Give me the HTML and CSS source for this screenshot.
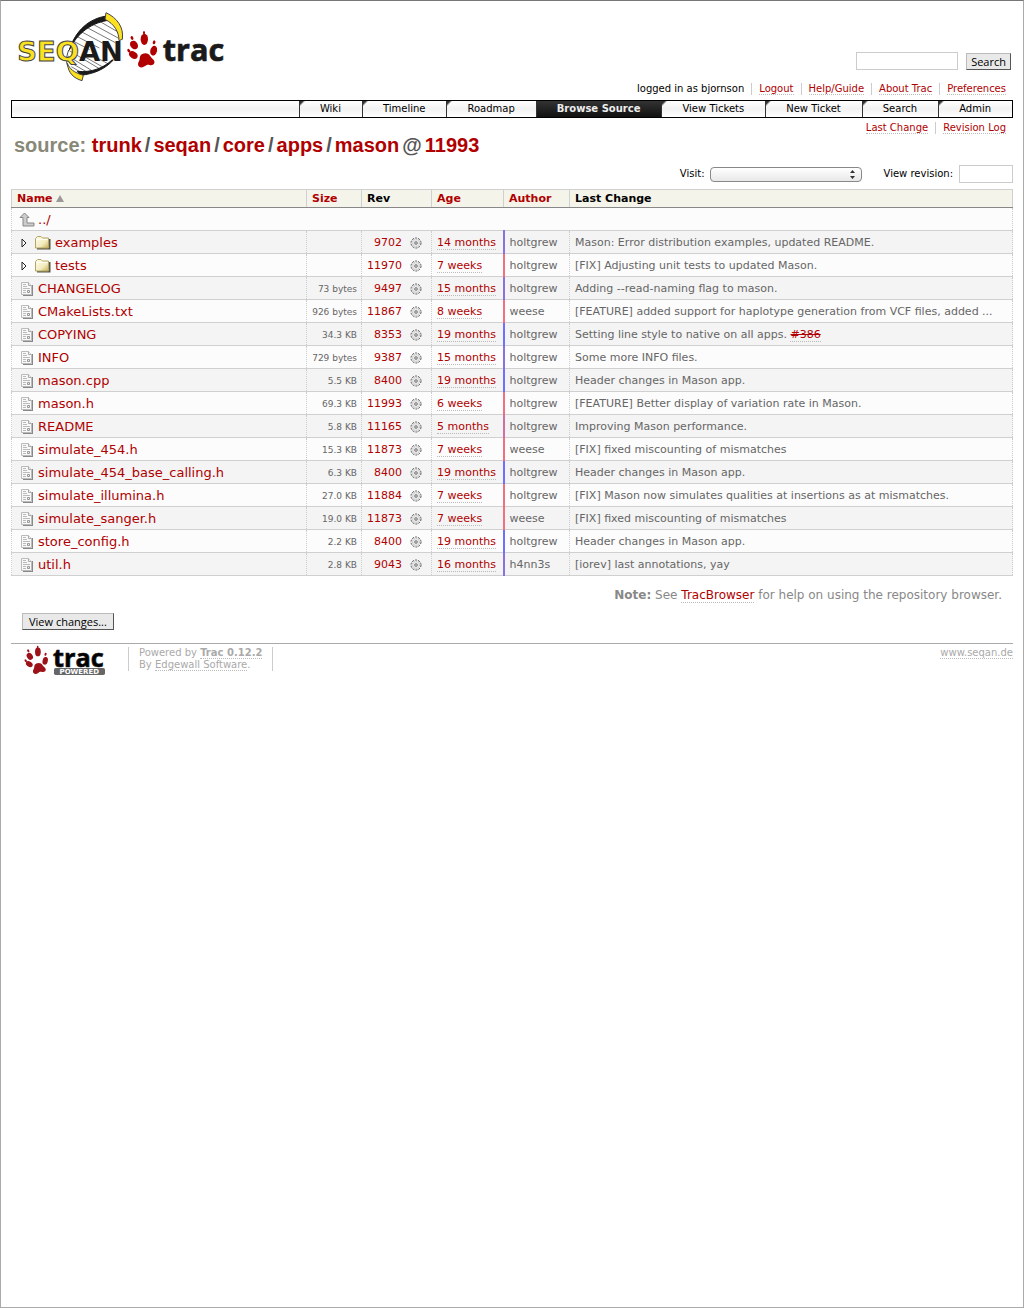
FILE: index.html
```html
<!DOCTYPE html>
<html lang="en">
<head>
<meta charset="utf-8">
<title>mason – SeqAn Trac</title>
<link rel="stylesheet" href="styles.css">
</head>
<body>
<svg class="defs" aria-hidden="true">
  <symbol id="paw" viewBox="0 0 90 110">
    <path d="M45 68c9-4 20-2 24 7 3 6 10 8 12 15 2 9-7 13-14 11-7-2-10 0-15 4-8 6-20 4-20-6 0-7 5-10 5-16 0-7 2-12 8-15z"/>
    <ellipse cx="20" cy="41" rx="11" ry="14" transform="rotate(-35 20 41)"/>
    <ellipse cx="51" cy="24" rx="11" ry="17"/>
    <ellipse cx="79" cy="58" rx="10" ry="15" transform="rotate(14 79 58)"/>
    <ellipse cx="18" cy="71" rx="10" ry="14" transform="rotate(-55 18 71)"/>
    <ellipse cx="14" cy="20" rx="4" ry="6" transform="rotate(-25 14 20)"/>
    <ellipse cx="50" cy="4" rx="3" ry="6"/>
    <ellipse cx="80" cy="33" rx="4" ry="6" transform="rotate(15 80 34)"/>
    <ellipse cx="4" cy="58" rx="4" ry="6" transform="rotate(-40 4 58)"/>
  </symbol>
  <symbol id="gear" viewBox="0 0 12 12">
    <path d="M4 1h1v1h2v-1h1v1h1v1h1v1h1v1h-1v2h1v1h-1v1h-1v1h-1v1h-1v-1h-2v1h-1v-1h-1v-1h-1v-1h-1v-1h1v-2h-1v-1h1v-1h1v-1h1z" fill="#e8e8e8"/>
    <circle cx="6" cy="6" r="5" fill="none" stroke="#555" stroke-dasharray="2 1.140"/>
    <circle cx="6" cy="6" r="3.500" fill="none" stroke="#bbb" stroke-dasharray="1 1"/>
    <path d="M5.500 4.500h1v1h1v1h-1v1h-1v-1h-1v-1h1z" fill="#fff" stroke="#666" stroke-width=".7"/>
  </symbol>
  <symbol id="doc" viewBox="0 0 13 16">
    <path d="M2 14.500h10M11.500 4v10" fill="none" stroke="#888"/>
    <path d="M.5 1.500h7l3 3v9H.5z" fill="#f8f8f8" stroke="#bbb"/>
    <path d="M7.500 1.500v3h3" fill="#eee" stroke="#aaa"/>
    <path d="M2 3.500h3M2 5.500h4M2 7.500h7M2 9.500h3M2 11.500h3" stroke="#bbb"/>
    <path d="M6.500 9.500h2v2h-2z" fill="#eee" stroke="#999"/>
  </symbol>
  <symbol id="folder" viewBox="0 0 16 15">
    <path d="M2 13.500h12.500V4" fill="none" stroke="#554" stroke-width="2"/>
    <path d="M.5 3.500l2-2H6l1.500 1.500h6v10H.5z" fill="url(#fold)" stroke="#b3a566"/>
    <path d="M1.500 4.500h11" stroke="#fffef0"/>
  </symbol>
  <symbol id="up" viewBox="0 0 16 16">
    <path d="M5.500 1L10 5.500H8v5.500h7v3H4V5.500H1z" fill="#ccc" stroke="#888"/>
  </symbol>
  <symbol id="tri" viewBox="0 0 6 10">
    <path d="M1 1v8l4-4z" fill="#fff" stroke="#222"/>
  </symbol>
  <linearGradient id="fold" x1="0" y1="0" x2="1" y2="1">
    <stop offset="0" stop-color="#fffde8"/><stop offset=".6" stop-color="#f3ebc0"/><stop offset="1" stop-color="#c4ae50"/>
  </linearGradient>
</svg>

<div class="page">
  <header class="banner">
    <a class="logo" href="#" aria-label="SeqAn Trac">
      <svg width="208" height="69" viewBox="51 36 624 207">
        <path d="M318 52C270 62 232 95 212 140c-8 22-10 52 4 70l32 14c50-12 94-50 108-95 8-22 8-48-6-62z" fill="#fff"/>
        <g stroke="#333" stroke-width="2">
          <path d="M292 60l62 36M272 69l88 48M256 80l90 48M240 93l90 48M228 108l70 36M219 123l50 26M208 152l90 54M204 168l72 44M204 183l58 34M214 200l34 20M250 168l60 34M280 168l46 24"/>
        </g>
        <path d="M332 60C276 66 232 98 208 150C226 92 268 54 322 48z" fill="#1a1a1a" stroke="#1a1a1a" stroke-width="3"/>
        <path d="M206 150c-8 22-8 40-2 48" fill="none" stroke="#444" stroke-width="3"/>
        <path d="M336 180C310 204 276 218 232 214L240 226C284 222 316 206 340 180z" fill="#1a1a1a" stroke="#1a1a1a" stroke-width="3"/>
        <path d="M318 38c34 16 54 44 49 80l-10 4c0-26-14-50-42-64z" fill="#fbe122" stroke="#444" stroke-width="3"/>
        <path d="M202 190c6 16 20 28 48 36l-4 16c-26-8-40-22-44-50z" fill="#fbe122" stroke="#444" stroke-width="3"/>
        <text class="logo-name" x="52" y="183" font-size="82"><tspan class="logo-seq">SEQ</tspan><tspan class="logo-an">AN</tspan></text>
        <use href="#paw" x="382" y="94" width="90" height="110" fill="#b00000"/>
        <text class="logo-word" x="488" y="183" font-size="92" fill="#1a1a1a">trac</text>
      </svg>
    </a>
    <form class="search">
      <input type="text" class="field search-field" aria-label="Search">
      <button type="button" class="btn">Search</button>
    </form>
  </header>

  <ul class="links metanav">
    <li>logged in as bjornson</li>
    <li><a href="#">Logout</a></li>
    <li><a href="#">Help/Guide</a></li>
    <li><a href="#">About Trac</a></li>
    <li><a href="#">Preferences</a></li>
  </ul>

  <nav class="mainnav">
    <a href="#">Wiki</a>
    <a href="#">Timeline</a>
    <a href="#">Roadmap</a>
    <a href="#" class="active">Browse Source</a>
    <a href="#">View Tickets</a>
    <a href="#">New Ticket</a>
    <a href="#">Search</a>
    <a href="#">Admin</a>
  </nav>

  <ul class="links ctxtnav">
    <li><a href="#">Last Change</a></li>
    <li><a href="#">Revision Log</a></li>
  </ul>

  <main>
    <h1><span class="first">source:</span> <a href="#">trunk</a><span class="sep">/</span><a href="#">seqan</a><span class="sep">/</span><a href="#">core</a><span class="sep">/</span><a href="#">apps</a><span class="sep">/</span><a href="#">mason</a><span class="sep">@</span><a href="#">11993</a></h1>

    <form class="jump">
      <label for="visit">Visit:</label>
      <span class="select-wrap">
        <select id="visit"><option></option></select>
        <svg class="arrows" width="5" height="9" viewBox="0 0 5 9"><path d="M0 3L2.500 0 5 3zM0 6l2.500 3L5 6z" fill="#333"/></svg>
      </span>
      <label for="rev" class="rev-label">View revision:</label>
      <input type="text" id="rev" class="field rev-field">
    </form>

    <table class="listing">
      <colgroup><col class="c-name"><col class="c-size"><col class="c-rev"><col class="c-age"><col class="c-author"><col></colgroup>
      <thead>
        <tr>
          <th><a href="#">Name <svg class="sort" width="8" height="7" viewBox="0 0 8 7"><path d="M4 0l4 7H0z" fill="#999"/></svg></a></th>
          <th><a href="#">Size</a></th><th>Rev</th><th><a href="#">Age</a></th><th><a href="#">Author</a></th><th>Last Change</th>
        </tr>
      </thead>
      <tbody>
        <tr><td class="name up" colspan="6"><a href="#"><svg width="16" height="16"><use href="#up"/></svg>../</a></td></tr>
        <tr><td class="name"><a href="#"><svg class="tri" width="6" height="10"><use href="#tri"/></svg><svg class="folder" width="16" height="15"><use href="#folder"/></svg>examples</a></td><td class="size"></td><td class="rev"><a href="#">9702<svg width="12" height="12"><use href="#gear"/></svg></a></td><td class="age months"><a href="#">14 months</a></td><td>holtgrew</td><td>Mason: Error distribution examples, updated README.</td></tr>
        <tr><td class="name"><a href="#"><svg class="tri" width="6" height="10"><use href="#tri"/></svg><svg class="folder" width="16" height="15"><use href="#folder"/></svg>tests</a></td><td class="size"></td><td class="rev"><a href="#">11970<svg width="12" height="12"><use href="#gear"/></svg></a></td><td class="age"><a href="#">7 weeks</a></td><td>holtgrew</td><td>[FIX] Adjusting unit tests to updated Mason.</td></tr>
        <tr><td class="name"><a href="#"><svg width="13" height="16"><use href="#doc"/></svg>CHANGELOG</a></td><td class="size">73 bytes</td><td class="rev"><a href="#">9497<svg width="12" height="12"><use href="#gear"/></svg></a></td><td class="age months"><a href="#">15 months</a></td><td>holtgrew</td><td>Adding --read-naming flag to mason.</td></tr>
        <tr><td class="name"><a href="#"><svg width="13" height="16"><use href="#doc"/></svg>CMakeLists.txt</a></td><td class="size">926 bytes</td><td class="rev"><a href="#">11867<svg width="12" height="12"><use href="#gear"/></svg></a></td><td class="age"><a href="#">8 weeks</a></td><td>weese</td><td>[FEATURE] added support for haplotype generation from VCF files, added ...</td></tr>
        <tr><td class="name"><a href="#"><svg width="13" height="16"><use href="#doc"/></svg>COPYING</a></td><td class="size">34.3 KB</td><td class="rev"><a href="#">8353<svg width="12" height="12"><use href="#gear"/></svg></a></td><td class="age old"><a href="#">19 months</a></td><td>holtgrew</td><td>Setting line style to native on all apps. <a class="closed" href="#">#386</a></td></tr>
        <tr><td class="name"><a href="#"><svg width="13" height="16"><use href="#doc"/></svg>INFO</a></td><td class="size">729 bytes</td><td class="rev"><a href="#">9387<svg width="12" height="12"><use href="#gear"/></svg></a></td><td class="age months"><a href="#">15 months</a></td><td>holtgrew</td><td>Some more INFO files.</td></tr>
        <tr><td class="name"><a href="#"><svg width="13" height="16"><use href="#doc"/></svg>mason.cpp</a></td><td class="size">5.5 KB</td><td class="rev"><a href="#">8400<svg width="12" height="12"><use href="#gear"/></svg></a></td><td class="age old"><a href="#">19 months</a></td><td>holtgrew</td><td>Header changes in Mason app.</td></tr>
        <tr><td class="name"><a href="#"><svg width="13" height="16"><use href="#doc"/></svg>mason.h</a></td><td class="size">69.3 KB</td><td class="rev"><a href="#">11993<svg width="12" height="12"><use href="#gear"/></svg></a></td><td class="age"><a href="#">6 weeks</a></td><td>holtgrew</td><td>[FEATURE] Better display of variation rate in Mason.</td></tr>
        <tr><td class="name"><a href="#"><svg width="13" height="16"><use href="#doc"/></svg>README</a></td><td class="size">5.8 KB</td><td class="rev"><a href="#">11165<svg width="12" height="12"><use href="#gear"/></svg></a></td><td class="age mid"><a href="#">5 months</a></td><td>holtgrew</td><td>Improving Mason performance.</td></tr>
        <tr><td class="name"><a href="#"><svg width="13" height="16"><use href="#doc"/></svg>simulate_454.h</a></td><td class="size">15.3 KB</td><td class="rev"><a href="#">11873<svg width="12" height="12"><use href="#gear"/></svg></a></td><td class="age"><a href="#">7 weeks</a></td><td>weese</td><td>[FIX] fixed miscounting of mismatches</td></tr>
        <tr><td class="name"><a href="#"><svg width="13" height="16"><use href="#doc"/></svg>simulate_454_base_calling.h</a></td><td class="size">6.3 KB</td><td class="rev"><a href="#">8400<svg width="12" height="12"><use href="#gear"/></svg></a></td><td class="age old"><a href="#">19 months</a></td><td>holtgrew</td><td>Header changes in Mason app.</td></tr>
        <tr><td class="name"><a href="#"><svg width="13" height="16"><use href="#doc"/></svg>simulate_illumina.h</a></td><td class="size">27.0 KB</td><td class="rev"><a href="#">11884<svg width="12" height="12"><use href="#gear"/></svg></a></td><td class="age"><a href="#">7 weeks</a></td><td>holtgrew</td><td>[FIX] Mason now simulates qualities at insertions as at mismatches.</td></tr>
        <tr><td class="name"><a href="#"><svg width="13" height="16"><use href="#doc"/></svg>simulate_sanger.h</a></td><td class="size">19.0 KB</td><td class="rev"><a href="#">11873<svg width="12" height="12"><use href="#gear"/></svg></a></td><td class="age"><a href="#">7 weeks</a></td><td>weese</td><td>[FIX] fixed miscounting of mismatches</td></tr>
        <tr><td class="name"><a href="#"><svg width="13" height="16"><use href="#doc"/></svg>store_config.h</a></td><td class="size">2.2 KB</td><td class="rev"><a href="#">8400<svg width="12" height="12"><use href="#gear"/></svg></a></td><td class="age old"><a href="#">19 months</a></td><td>holtgrew</td><td>Header changes in Mason app.</td></tr>
        <tr><td class="name"><a href="#"><svg width="13" height="16"><use href="#doc"/></svg>util.h</a></td><td class="size">2.8 KB</td><td class="rev"><a href="#">9043<svg width="12" height="12"><use href="#gear"/></svg></a></td><td class="age months"><a href="#">16 months</a></td><td>h4nn3s</td><td>[iorev] last annotations, yay</td></tr>
      </tbody>
    </table>

    <p class="note"><strong>Note:</strong> See <a href="#">TracBrowser</a> for help on using the repository browser.</p>
    <button type="button" class="btn changes">View changes...</button>
  </main>

  <footer>
    <a class="powered" href="#" aria-label="Trac Powered">
      <svg width="82" height="30" viewBox="75 195 246 90">
        <use href="#paw" x="76" y="197" width="72" height="86" fill="#9c1218"/>
        <text class="logo-word" x="162" y="261" font-size="76">trac</text>
        <rect x="165" y="264" width="153" height="21" rx="5" fill="#666"/>
        <text class="logo-tag" x="241" y="282" font-size="21" text-anchor="middle">POWERED</text>
      </svg>
    </a>
    <p class="credit">Powered by <a href="#"><strong>Trac 0.12.2</strong></a><br>By <a href="#">Edgewall Software</a>.</p>
    <p class="site"><a href="#">www.seqan.de</a></p>
  </footer>
</div>
</body>
</html>
```
FILE: styles.css
```css
* { box-sizing: border-box; }
body {
  margin: 0;
  background: #fff;
  color: #000;
  font: 13px/16px "DejaVu Sans", Verdana, sans-serif;
}
.defs { position: absolute; width: 0; height: 0; }
.page {
  min-height: 100vh;
  padding: 11px 10px 10px;
  border: 1px solid #aaa;
  border-top-color: #777;
}
a { color: #b00000; text-decoration: none; }
ul { list-style: none; margin: 0; padding: 0; }

.banner { display: flex; justify-content: space-between; align-items: flex-end; padding: 0 2px 0 6px; height: 69px; }
.logo svg, .powered svg { display: block; overflow: visible; }
.logo-word { font-family: "Open Sans", sans-serif; font-weight: 700; stroke: #1a1a1a; stroke-width: 2px; }
.logo-name { font-family: "DejaVu Sans", sans-serif; font-weight: 700; }
.logo-seq { fill: #fbe122; stroke: #444; stroke-width: 3px; }
.logo-an { fill: #1a1a1a; }
.logo-tag { font-family: "DejaVu Sans", sans-serif; font-weight: bold; fill: #fff; }
.search { display: flex; align-items: center; gap: 8px; padding-bottom: 11px; }
.field { border: 1px solid #ccc; background: #fff; height: 18px; padding: 0 2px; font: 11px "DejaVu Sans", sans-serif; }
.search-field { width: 102px; }
.btn {
  height: 17px;
  padding: 0 4px;
  border: 1px solid;
  border-color: #bbb #555 #555 #bbb;
  background: #e9e9e9;
  color: #000;
  font: 11px/15px "Open Sans", sans-serif;
}

.links { display: flex; justify-content: flex-end; font-size: 10px; line-height: 12px; }
.links li { padding: 0 7px; border-left: 1px solid #ccc; }
.links li:first-child { border-left: 0; }
.links a, .age a, .note a, footer p a { border-bottom: 1px dotted #bbb; }
.metanav { padding: 2px 0 5px; }
.ctxtnav { padding: 4px 0 0; }

.mainnav {
  display: flex;
  justify-content: flex-end;
  border: 1px solid #000;
  background: linear-gradient(#fff, #f2f2f2 50%, #fff);
  font-size: 10px;
  line-height: 16px;
}
.mainnav a {
  padding: 0 21px 0 20px;
  border-left: 1px solid #333;
  color: #000;
  background: linear-gradient(135deg, #333 2px, transparent 4px);
}
.mainnav a.active { background: linear-gradient(#333, #111); color: #eee; font-weight: bold; }

h1 { margin: 0 0 0 3px; font: bold 20px/22px "Liberation Sans", Arial, sans-serif; }
h1 .first { color: #887; }
h1 .sep { color: #555; padding: 0 3px; }

.jump { display: flex; justify-content: flex-end; align-items: center; margin: 9px 0 6px; font-size: 10px; line-height: 18px; }
.select-wrap { position: relative; display: flex; margin-left: 5px; }
select {
  appearance: none;
  width: 152px;
  height: 15px;
  border: 1px solid #888;
  border-radius: 4px;
  background: linear-gradient(#fff, #e8e8e8);
}
.arrows { position: absolute; right: 7px; top: 3px; }
.rev-label { margin: 0 6px 0 22px; }
.rev-field { width: 54px; }

.listing {
  width: 100%;
  table-layout: fixed;
  border-collapse: collapse;
  border: 1px dotted #ccc;
  border-top: 1px solid #d7d7d7;
  font-size: 11px;
  line-height: 14px;
  color: #666;
}
.c-name { width: 295px; }
.c-size { width: 55px; }
.c-rev { width: 70px; }
.c-age { width: 72px; }
.c-author { width: 66px; }
th {
  height: 18px;
  padding: 0 5px;
  border: 1px solid #d0d0d0;
  border-bottom-color: #888;
  background: #f4f4ea;
  color: #000;
  text-align: left;
}
td {
  height: 23px;
  padding: 1px 5px 0;
  border: 1px dotted #ccc;
  border-bottom: 1px solid #d0d0d0;
  white-space: nowrap;
}
tbody tr { background: #fcfcfc; }
tbody tr:nth-child(even) { background: #f4f4f4; }
.name { font-size: 13px; padding-left: 9px; }
.name a, .rev a { display: flex; align-items: center; }
.name svg { margin-right: 4px; }
.name .tri { margin: 0 8px 0 0; }
.up { padding-left: 7px; }
.up svg { margin-right: 3px; }
.size { font-size: 9px; text-align: right; padding-right: 4px; }
.rev a { justify-content: flex-end; gap: 8px; padding-right: 4px; }
td.age { border-right: 2px solid #f0707f; }
td.age.mid { border-right-color: #d070a0; }
td.age.months { border-right-color: #8c70e0; }
td.age.old { border-right-color: #7070ff; }
.closed { text-decoration: line-through; border-bottom: 1px dotted #bbb; }

.note { margin: 11px 11px 0; text-align: right; color: #888; font-size: 12px; }
.changes { display: block; margin: 10px 11px 13px; padding: 0 6px; }

footer { display: flex; border-top: 1px solid #aaa; color: #aaa; font-size: 10px; line-height: 12px; }
footer p { margin: 3px 0 0; }
footer p a { color: #aaa; }
.powered { margin: 1px 22px 0 13px; }
.credit { padding: 0 10px; border: solid #ccc; border-width: 0 1px; height: 24px; }
.site { margin-left: auto; }
```
